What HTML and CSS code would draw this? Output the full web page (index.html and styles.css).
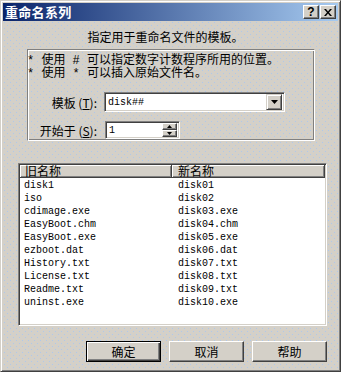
FILE: index.html
```html
<!DOCTYPE html>
<html lang="zh-CN">
<head>
  <meta charset="UTF-8">
  <title>重命名系列</title>
  <link rel="stylesheet" href="styles.css">
</head>
<body>

<div class="window">
  <div class="titlebar">
    <span class="title">重命名系列</span>
    <div class="title-buttons">
      <span class="tbtn tbtn-help">?</span>
      <span class="tbtn">
        <svg width="8" height="7" viewBox="0 0 8 7">
          <path d="M0 0h2l2 2.5L6 0h2L5 3.5 8 7H6L4 4.5 2 7H0l3-3.5z" fill="#000"/>
        </svg>
      </span>
    </div>
  </div>

  <div class="content">
    <p class="intro">指定用于重命名文件的模板。</p>

    <div class="group">
      <div class="hints">
        <div class="hint">* 使用 # 可以指定数字计数程序所用的位置。</div>
        <div class="hint">* 使用 * 可以插入原始文件名。</div>
      </div>
      <div class="field-row row-template">
        <label class="field-label">模板 (<u>T</u>):</label>
        <div class="combo">
          <span class="mono">disk##</span>
          <span class="combo-btn">
            <svg width="7" height="4" viewBox="0 0 7 4"><path d="M0 0h7L3.5 4z" fill="#000"/></svg>
          </span>
        </div>
      </div>
      <div class="field-row row-start">
        <label class="field-label">开始于 (<u>S</u>):</label>
        <div class="spinner">
          <span class="mono">1</span>
          <div class="spin-btns">
            <span class="spin-btn"><svg width="5" height="3" viewBox="0 0 5 3"><path d="M2.5 0L5 3H0z" fill="#000"/></svg></span>
            <span class="spin-btn"><svg width="5" height="3" viewBox="0 0 5 3"><path d="M0 0h5L2.5 3z" fill="#000"/></svg></span>
          </div>
        </div>
      </div>
    </div>

    <div class="listview">
      <div class="list-header">
        <span class="hcell col-old">旧名称</span>
        <span class="hcell col-new">新名称</span>
      </div>
      <div class="list-body">
        <div class="row"><span class="col-old">disk1</span><span class="col-new">disk01</span></div>
        <div class="row"><span class="col-old">iso</span><span class="col-new">disk02</span></div>
        <div class="row"><span class="col-old">cdimage.exe</span><span class="col-new">disk03.exe</span></div>
        <div class="row"><span class="col-old">EasyBoot.chm</span><span class="col-new">disk04.chm</span></div>
        <div class="row"><span class="col-old">EasyBoot.exe</span><span class="col-new">disk05.exe</span></div>
        <div class="row"><span class="col-old">ezboot.dat</span><span class="col-new">disk06.dat</span></div>
        <div class="row"><span class="col-old">History.txt</span><span class="col-new">disk07.txt</span></div>
        <div class="row"><span class="col-old">License.txt</span><span class="col-new">disk08.txt</span></div>
        <div class="row"><span class="col-old">Readme.txt</span><span class="col-new">disk09.txt</span></div>
        <div class="row"><span class="col-old">uninst.exe</span><span class="col-new">disk10.exe</span></div>
      </div>
    </div>

    <div class="buttons">
      <button class="btn btn-default">确定</button>
      <button class="btn">取消</button>
      <button class="btn">帮助</button>
    </div>
  </div>
</div>

</body>
</html>
```

FILE: styles.css
```css
body {
  margin: 0;
  font-family: "Noto Sans CJK SC", "Liberation Sans", sans-serif;
  font-size: 12px;
  color: #000;
}
.window {
  width: 341px;
  height: 372px;
  box-sizing: border-box;
  border: 1px solid;
  border-color: #d4d0c8 #404040 #404040 #d4d0c8;
  box-shadow: inset 1px 1px #fff, inset -1px -1px #808080;
  padding: 2px;
  background-color: #d4d0c8;
  background-image:
    conic-gradient(from 270deg at 1px 1px, #aec8ec 25%, transparent 0),
    conic-gradient(from 270deg at 1px 1px, #aec8ec 25%, transparent 0);
  background-size: 6px 6px;
  background-position: 0 0, 3px 3px;
}
.titlebar {
  height: 18px;
  display: flex;
  align-items: center;
  justify-content: space-between;
  background: linear-gradient(to right, #0a246a, #a6caf0);
  padding: 0 2px;
}
.title {
  color: #fff;
  font-weight: bold;
  font-size: 13px;
  line-height: 18px;
  letter-spacing: 0.3px;
}
.title-buttons {
  display: flex;
  gap: 1px;
}
.tbtn {
  width: 16px;
  height: 14px;
  box-sizing: border-box;
  display: flex;
  align-items: center;
  justify-content: center;
  background: #d4d0c8;
  border: 1px solid;
  border-color: #fff #404040 #404040 #fff;
  box-shadow: inset -1px -1px #808080;
}
.tbtn-help {
  font-family: "Liberation Sans", sans-serif;
  font-weight: bold;
  font-size: 12px;
  line-height: 12px;
}

.content {
  padding: 0 11px 0 15px;
}
.intro {
  margin: 9px 14px 0 0;
  line-height: 14px;
  text-align: center;
}

.group {
  margin: 5px 12px 0 9px;
  border: 1px solid;
  border-color: #808080 #fff #fff #808080;
  box-shadow: inset 1px 1px #fff, inset -1px -1px #808080;
  padding: 5px 0 0 0;
  height: 92px;
  box-sizing: border-box;
}
.hints {
  margin-left: -1px;
  font-family: "Liberation Mono", "Noto Sans CJK SC", monospace;
}
.hint {
  height: 13px;
  line-height: 13px;
}
.field-row {
  display: flex;
  align-items: center;
}
.row-template {
  margin-top: 11px;
  gap: 7px;
}
.row-start {
  margin-top: 9px;
  gap: 8px;
}
.field-label {
  width: 69px;
  text-align: right;
}
.mono {
  font-family: "Liberation Mono", monospace;
  font-size: 10px;
}
.combo,
.spinner {
  display: flex;
  align-items: center;
  justify-content: space-between;
  box-sizing: border-box;
  background: #fff;
  border: 1px solid;
  border-color: #808080 #fff #fff #808080;
  box-shadow: inset 1px 1px #404040, inset -1px -1px #d4d0c8;
  padding: 2px 2px 2px 3px;
}
.combo {
  width: 181px;
  height: 20px;
}
.spinner {
  width: 75px;
  height: 18px;
}
.combo-btn {
  width: 16px;
  height: 16px;
  box-sizing: border-box;
  display: flex;
  align-items: center;
  justify-content: center;
  background: #d4d0c8;
  border: 1px solid;
  border-color: #d4d0c8 #404040 #404040 #d4d0c8;
  box-shadow: inset 1px 1px #fff, inset -1px -1px #808080;
}
.spin-btns {
  display: flex;
  flex-direction: column;
  width: 15px;
  height: 14px;
}
.spin-btn {
  flex: 1;
  display: flex;
  align-items: center;
  justify-content: center;
  background: #d4d0c8;
  border: 1px solid;
  border-color: #fff #404040 #404040 #fff;
  box-shadow: inset -1px -1px #808080;
  box-sizing: border-box;
}

.listview {
  margin-top: 22px;
  height: 163px;
  box-sizing: border-box;
  background: #fff;
  border: 1px solid;
  border-color: #808080 #fff #fff #808080;
  box-shadow: inset 1px 1px #404040, inset -1px -1px #d4d0c8;
  padding: 1px;
}
.list-header {
  display: flex;
  height: 13px;
}
.hcell {
  box-sizing: border-box;
  background: #d4d0c8;
  border-right: 1px solid #404040;
  border-bottom: 1px solid #404040;
  box-shadow: inset 1px 1px #fff, inset -1px -1px #808080;
  line-height: 12px;
}
.col-old {
  width: 152px;
  padding-left: 4px;
  box-sizing: border-box;
}
.col-new {
  width: 153px;
  padding-left: 6px;
  box-sizing: border-box;
}
.hcell.col-old {
  padding-left: 5px;
}
.list-body {
  padding-top: 1px;
  font-family: "Liberation Mono", monospace;
  font-size: 10px;
}
.row {
  display: flex;
  line-height: 13px;
}

.buttons {
  display: flex;
  justify-content: flex-end;
  gap: 8px;
  margin-top: 15px;
}
.btn {
  width: 75px;
  height: 21px;
  padding: 0;
  font-family: "Noto Sans CJK SC", sans-serif;
  font-size: 12px;
  color: #000;
  background: #d4d0c8;
  border: 1px solid;
  border-color: #fff #404040 #404040 #fff;
  box-shadow: inset -1px -1px #808080;
}
.btn-default {
  border-color: #000;
  box-shadow: inset 1px 1px #fff, inset -1px -1px #404040, inset -2px -2px #808080;
}
```
